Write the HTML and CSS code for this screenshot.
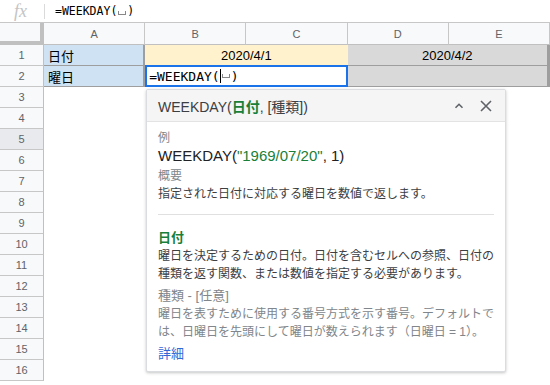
FILE: index.html
```html
<!DOCTYPE html>
<html lang="ja">
  <head>
    <meta charset="UTF-8" />
    <title>WEEKDAY</title>
    <link rel="stylesheet" href="styles.css">
  </head>
  <body>
    <div class="formula-bar">
      <span class="fx">fx</span>
      <span class="fx-sep"></span>
      <span class="formula">=WEEKDAY(<span class="blank"></span>)</span>
    </div>

    <div class="sheet">
      <div class="corner"></div>
      <div class="col-head">A</div>
      <div class="col-head">B</div>
      <div class="col-head">C</div>
      <div class="col-head">D</div>
      <div class="col-head">E</div>

      <div class="row-head">1</div>
      <div class="cell label">日付</div>
      <div class="cell date yellow span2">2020/4/1</div>
      <div class="cell date grey span2 last">2020/4/2</div>

      <div class="row-head">2</div>
      <div class="cell label">曜日</div>
      <div class="cell editing span2">=WEEKDAY(<span class="caret"></span><span class="blank"></span>)</div>
      <div class="cell grey span2 last"></div>

      <div class="row-head">3</div><div class="empty"></div>
      <div class="row-head">4</div><div class="empty"></div>
      <div class="row-head hover">5</div><div class="empty"></div>
      <div class="row-head">6</div><div class="empty"></div>
      <div class="row-head">7</div><div class="empty"></div>
      <div class="row-head">8</div><div class="empty"></div>
      <div class="row-head">9</div><div class="empty"></div>
      <div class="row-head">10</div><div class="empty"></div>
      <div class="row-head">11</div><div class="empty"></div>
      <div class="row-head">12</div><div class="empty"></div>
      <div class="row-head">13</div><div class="empty"></div>
      <div class="row-head">14</div><div class="empty"></div>
      <div class="row-head">15</div><div class="empty"></div>
      <div class="row-head">16</div><div class="empty"></div>
    </div>

    <div class="help">
      <div class="help-head">
        <span class="help-title">WEEKDAY(<b class="arg">日付</b>, [種類])</span>
        <svg class="icon" width="12" height="12" viewBox="0 0 12 12">
          <path d="M2.5 7.8 L6 4.3 L9.5 7.8" fill="none" stroke="#5f6368" stroke-width="1.6" />
        </svg>
        <svg class="icon" width="14" height="14" viewBox="0 0 14 14">
          <path d="M2 2 L12 12 M12 2 L2 12" fill="none" stroke="#5f6368" stroke-width="1.6" />
        </svg>
      </div>
      <div class="help-body">
        <div class="small-label">例</div>
        <div class="example">WEEKDAY(<span class="str">"1969/07/20"</span>, 1)</div>
        <div class="small-label gap">概要</div>
        <div class="text">指定された日付に対応する曜日を数値で返します。</div>
        <hr class="divider" />
        <div class="arg-name">日付</div>
        <div class="text">曜日を決定するための日付。日付を含むセルへの参照、日付の種類を返す関数、または数値を指定する必要があります。</div>
        <div class="opt-name">種類 - [任意]</div>
        <div class="text muted">曜日を表すために使用する番号方式を示す番号。デフォルトでは、日曜日を先頭にして曜日が数えられます（日曜日 = 1）。</div>
        <a class="more" href="#">詳細</a>
      </div>
    </div>
  </body>
</html>
```

FILE: styles.css
```css
body {
  margin: 0;
  width: 550px;
  height: 385px;
  overflow: hidden;
  position: relative;
  background: #fff;
  font-family: "Liberation Sans", "Noto Sans CJK JP", sans-serif;
  color: #000;
}
.formula-bar {
  height: 22px;
  border-bottom: 1px solid #c7c7c7;
  display: flex;
  align-items: center;
}
.fx {
  width: 41px;
  text-align: center;
  font-family: "Liberation Serif", serif;
  font-style: italic;
  font-size: 18px;
  color: #c4c4c4;
  line-height: 22px;
}
.fx-sep {
  width: 1px;
  height: 15px;
  margin-left: 3px;
  background: #dadada;
}
.formula,
.editing {
  font-family: "DejaVu Sans Mono", monospace;
  font-size: 11.5px;
  color: #000;
}
.formula {
  margin-left: 10px;
}
.blank {
  display: inline-block;
  width: 6px;
  height: 3px;
  margin: 0 1px;
  border: 1px solid #888;
  border-top: none;
}
.caret {
  display: inline-block;
  width: 1px;
  height: 14px;
  background: #000;
  vertical-align: -3px;
}
.sheet {
  display: grid;
  grid-template-columns: 44px repeat(5, 1fr);
  grid-template-rows: 22px repeat(16, 21px);
}
.sheet > div {
  box-sizing: border-box;
}
.corner {
  background: #f8f9fa;
  border-right: 4px solid #c0c0c0;
  border-bottom: 4px solid #c0c0c0;
}
.col-head {
  background: #f8f9fa;
  border-right: 1px solid #c7c7c7;
  border-bottom: 1px solid #c0c0c0;
  color: #5f6368;
  font-size: 11px;
  display: flex;
  align-items: center;
  justify-content: center;
}
.row-head {
  background: #f8f9fa;
  border-right: 1px solid #c0c0c0;
  border-bottom: 1px solid #c7c7c7;
  color: #5f6368;
  font-size: 11px;
  display: flex;
  align-items: center;
  justify-content: center;
}
.row-head.hover {
  background: #e8eaed;
}
.empty {
  grid-column: span 5;
}
.cell {
  display: flex;
  align-items: center;
  font-size: 13px;
  border-bottom: 1px solid #9e9e9e;
  padding: 0 4px;
}
.span2 {
  grid-column: span 2;
}
.label {
  background: #cfe2f3;
  border-right: 2px solid #9e9e9e;
}
.date {
  justify-content: center;
}
.yellow {
  background: #fff2cc;
}
.grey {
  background: #d9d9d9;
}
.last {
  border-right: 3px solid #9e9e9e;
}
.editing {
  background: #fff;
  border: 2px solid #1a73e8;
  padding-left: 2px;
  margin-top: -1px;
}
.help {
  position: absolute;
  left: 146px;
  top: 89px;
  width: 360px;
  box-sizing: border-box;
  background: #fff;
  border: 1px solid #dadce0;
  border-radius: 2px;
  box-shadow: 0 1px 3px rgba(60, 64, 67, 0.3);
}
.help-head {
  height: 32px;
  box-sizing: border-box;
  background: #f5f5f5;
  border-bottom: 1px solid #e3e3e3;
  display: flex;
  align-items: center;
  padding: 0 12px 0 11px;
  gap: 14px;
}
.help-title {
  flex: 1;
  font-size: 14px;
  color: #3c4043;
}
.arg {
  color: #188038;
  font-weight: bold;
}
.help-body {
  padding: 7px 11px 8px;
}
.small-label {
  font-size: 12px;
  line-height: 18px;
  color: #80868b;
}
.small-label.gap {
  margin-top: 2px;
}
.example {
  font-size: 15px;
  line-height: 18px;
  color: #202124;
}
.str {
  color: #188038;
}
.text {
  font-size: 12px;
  line-height: 18px;
  color: #3c4043;
}
.muted {
  color: #80868b;
}
.divider {
  border: none;
  border-top: 1px solid #e0e0e0;
  margin: 11px 0 14px;
}
.arg-name {
  font-size: 13px;
  line-height: 18px;
  font-weight: bold;
  color: #188038;
}
.opt-name {
  font-size: 13px;
  line-height: 18px;
  color: #80868b;
  margin-top: 4px;
}
.more {
  display: block;
  margin-top: 4px;
  font-size: 13px;
  line-height: 18px;
  color: #3367d6;
  text-decoration: none;
}
```
